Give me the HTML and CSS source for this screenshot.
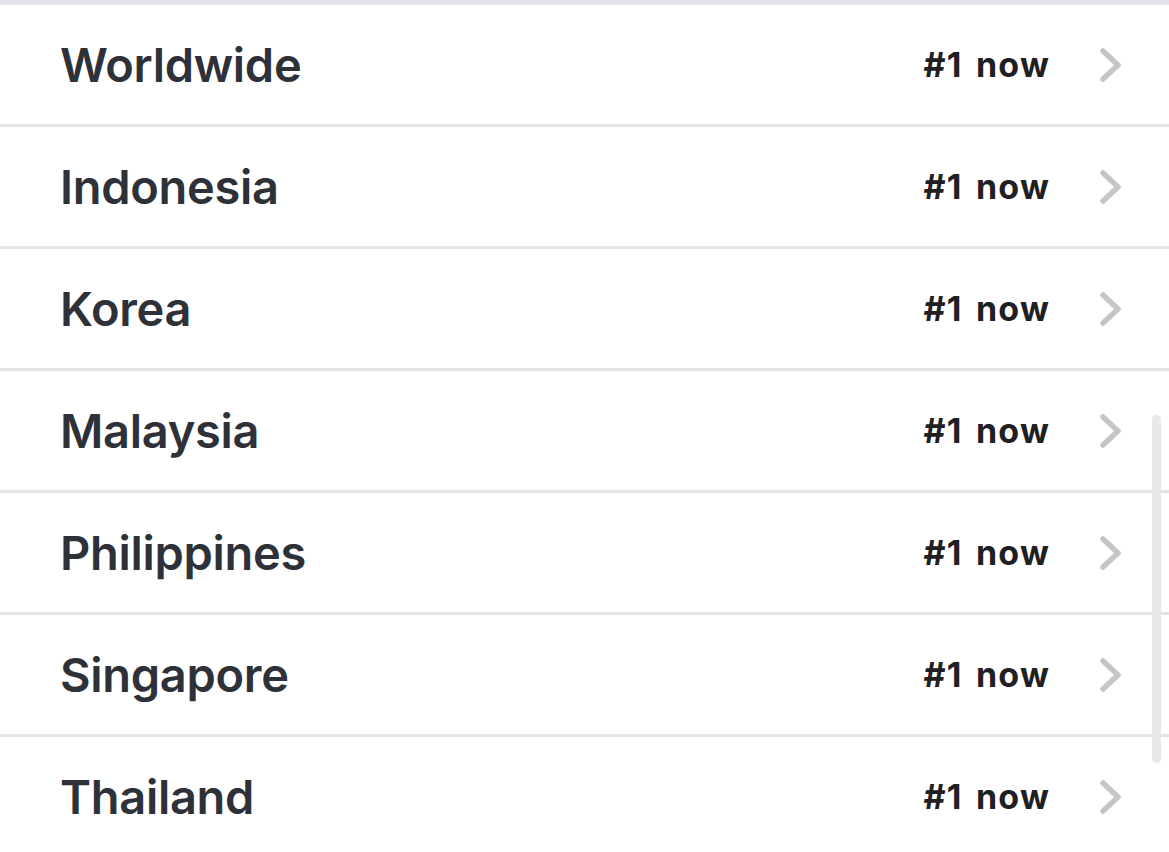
FILE: index.html
```html
<!DOCTYPE html>
<html>
<head>
<meta charset="utf-8">
<link rel="stylesheet" href="styles.css">
</head>
<body>
<div class="screen">
  <ul class="list">
    <li class="row"><span class="name">Worldwide</span><span class="rank">#1 now</span><svg class="chev" viewBox="0 0 24 36"><path d="M4 4 L19 18 L4 32" /></svg></li>
    <li class="row"><span class="name">Indonesia</span><span class="rank">#1 now</span><svg class="chev" viewBox="0 0 24 36"><path d="M4 4 L19 18 L4 32" /></svg></li>
    <li class="row"><span class="name">Korea</span><span class="rank">#1 now</span><svg class="chev" viewBox="0 0 24 36"><path d="M4 4 L19 18 L4 32" /></svg></li>
    <li class="row"><span class="name">Malaysia</span><span class="rank">#1 now</span><svg class="chev" viewBox="0 0 24 36"><path d="M4 4 L19 18 L4 32" /></svg></li>
    <li class="row"><span class="name">Philippines</span><span class="rank">#1 now</span><svg class="chev" viewBox="0 0 24 36"><path d="M4 4 L19 18 L4 32" /></svg></li>
    <li class="row"><span class="name">Singapore</span><span class="rank">#1 now</span><svg class="chev" viewBox="0 0 24 36"><path d="M4 4 L19 18 L4 32" /></svg></li>
    <li class="row"><span class="name">Thailand</span><span class="rank">#1 now</span><svg class="chev" viewBox="0 0 24 36"><path d="M4 4 L19 18 L4 32" /></svg></li>
  </ul>
  <div class="scrollbar"></div>
</div>
</body>
</html>
```
FILE: styles.css
```css
html, body {
  margin: 0;
  padding: 0;
  background: #ffffff;
}
.screen {
  position: relative;
  width: 1169px;
  height: 852px;
  overflow: hidden;
  border-top: 5px solid #e2e2e8;
  box-sizing: border-box;
  font-family: Inter, "Liberation Sans", sans-serif;
}
.list {
  list-style: none;
  margin: 0;
  padding: 0;
}
.row {
  display: flex;
  align-items: center;
  height: 119px;
  border-bottom: 3px solid #e3e3e8;
  padding-left: 60px;
  padding-right: 46px;
}
.name {
  flex: 1;
  font-size: 47px;
  font-weight: 600;
  color: #2e3138;
  letter-spacing: -0.3px;
}
.rank {
  font-size: 34px;
  font-weight: 700;
  color: #1f2023;
  letter-spacing: 1.2px;
  word-spacing: 4px;
  margin-right: 49px;
}
.chev {
  width: 24px;
  height: 36px;
  fill: none;
  stroke: #c5c5c7;
  stroke-width: 5.5;
  stroke-linecap: round;
  stroke-linejoin: round;
}
.scrollbar {
  position: absolute;
  left: 1152px;
  top: 410px;
  width: 9px;
  height: 348px;
  border-radius: 5px;
  background: #e8e8ea;
}
```
